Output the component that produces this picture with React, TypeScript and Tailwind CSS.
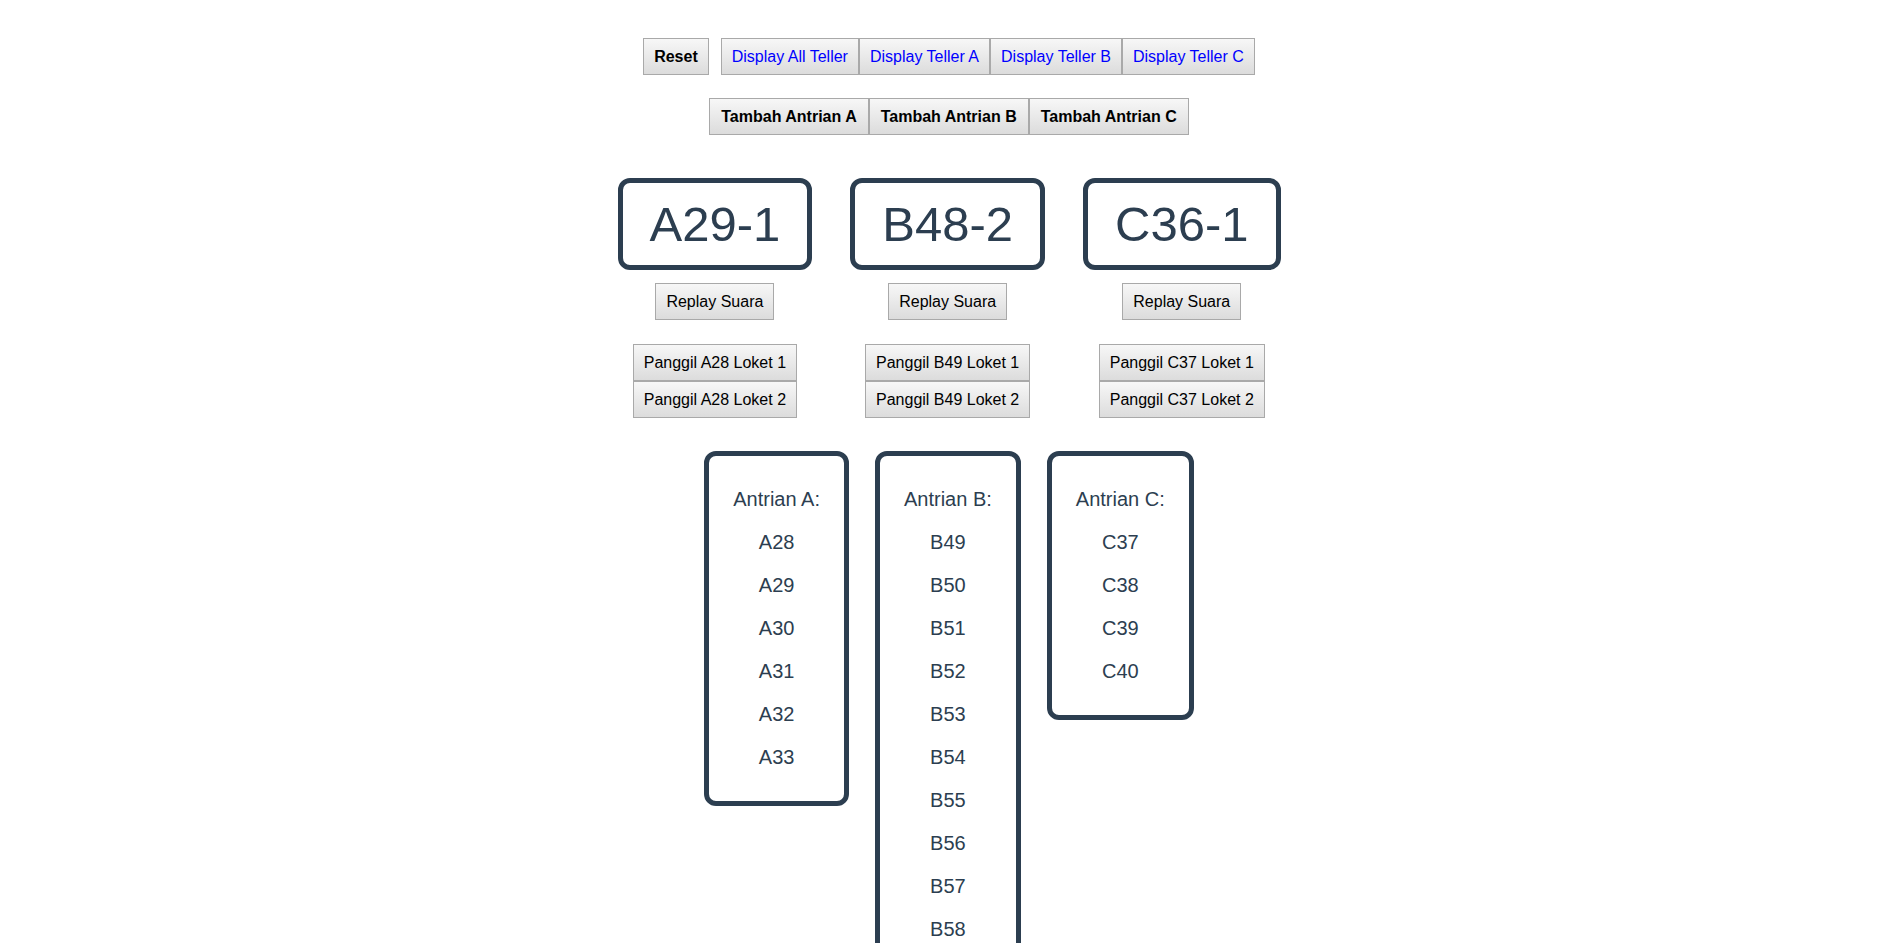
import type { ReactNode } from 'react';

const btn =
  'border border-[#a9a9a9] bg-linear-to-b from-[#f7f7f7] to-[#dcdcdc] px-[10px] py-[8px] text-[16px] leading-[19px] whitespace-nowrap';

function Btn({ children, className = '' }: { children: ReactNode; className?: string }) {
  return <button className={`${btn} ${className}`}>{children}</button>;
}

const tellers = [
  { now: 'A29-1', next: 'A28', queue: ['A28', 'A29', 'A30', 'A31', 'A32', 'A33'], label: 'A' },
  {
    now: 'B48-2',
    next: 'B49',
    queue: ['B49', 'B50', 'B51', 'B52', 'B53', 'B54', 'B55', 'B56', 'B57', 'B58', 'B59', 'B60', 'B61'],
    label: 'B',
  },
  { now: 'C36-1', next: 'C37', queue: ['C37', 'C38', 'C39', 'C40'], label: 'C' },
];

export default function App() {
  return (
    <div className="min-h-screen bg-white pt-[38px] text-black font-['Liberation_Sans',Arial,sans-serif]">
      <div className="flex justify-center">
        <Btn className="mr-[12px] font-bold">Reset</Btn>
        <Btn className="text-[#0000ff]">Display All Teller</Btn>
        <Btn className="text-[#0000ff]">Display Teller A</Btn>
        <Btn className="text-[#0000ff]">Display Teller B</Btn>
        <Btn className="text-[#0000ff]">Display Teller C</Btn>
      </div>

      <div className="mt-[23px] flex justify-center">
        {tellers.map((t) => (
          <Btn key={t.label} className="px-[11px] font-bold">
            Tambah Antrian {t.label}
          </Btn>
        ))}
      </div>

      <div className="mt-[43px] flex items-start justify-center gap-[38px]">
        {tellers.map((t) => (
          <div key={t.label} className="flex flex-col items-center">
            <div className="rounded-[12px] border-[5px] border-[#2c3e50] px-[27px] py-[13px] text-[49px] leading-[1.15] text-[#2c3e50]">
              {t.now}
            </div>
            <Btn className="mt-[13px]">Replay Suara</Btn>
            <div className="mt-[24px] flex flex-col">
              <Btn>Panggil {t.next} Loket 1</Btn>
              <Btn>Panggil {t.next} Loket 2</Btn>
            </div>
          </div>
        ))}
      </div>

      <div className="mt-[33px] flex items-start justify-center gap-[26px] pb-10">
        {tellers.map((t) => (
          <div
            key={t.label}
            className="flex flex-col items-center gap-[20px] rounded-[12px] border-[5px] border-[#2c3e50] px-6 py-[32px] text-[20px] leading-[23px] text-[#2c3e50]"
          >
            <p>Antrian {t.label}:</p>
            {t.queue.map((q) => (
              <p key={q}>{q}</p>
            ))}
          </div>
        ))}
      </div>
    </div>
  );
}
